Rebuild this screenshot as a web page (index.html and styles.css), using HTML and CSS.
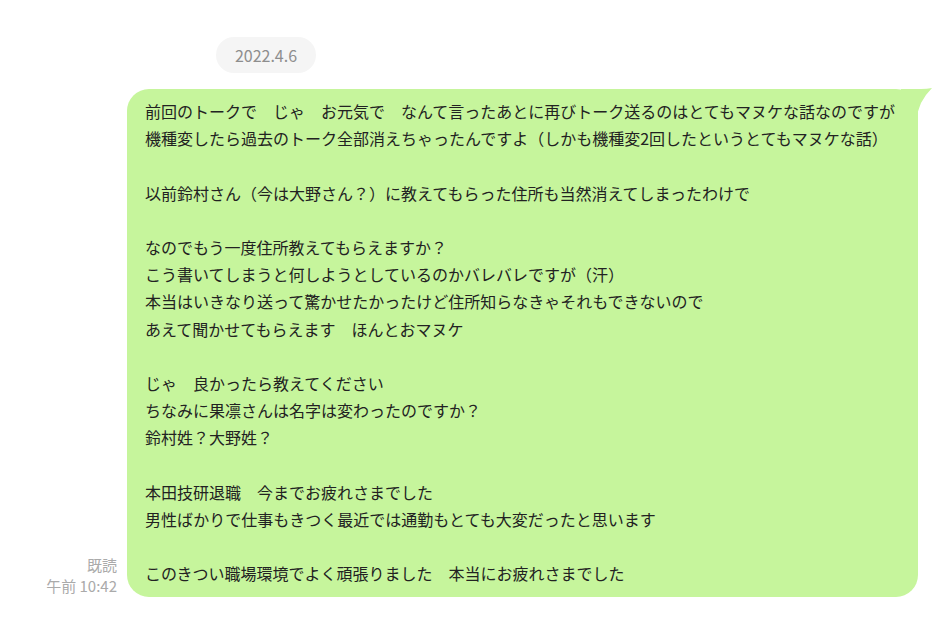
FILE: index.html
```html
<!DOCTYPE html>
<html lang="ja">
<head>
    <meta charset="UTF-8">
    <title>トーク</title>
    <link rel="stylesheet" href="styles.css">
</head>
<body>
    <div class="talk">
        <div class="date-row">
            <span class="date">2022.4.6</span>
        </div>
        <div class="msg-row">
            <div class="meta">
                <div>既読</div>
                <div>午前 10:42</div>
            </div>
            <div class="bubble">
                <svg class="tail" width="32" height="26" viewBox="0 0 32 26">
                    <path d="M0 0 L20 0 Q26 0 31 -1 Q24 6 20 14 Q17 22 16 26 L0 26 Z" fill="#c6f59c"/>
                </svg>
                <p class="text">前回のトークで　じゃ　お元気で　なんて言ったあとに再びトーク送るのはとてもマヌケな話なのですが
機種変したら過去のトーク全部消えちゃったんですよ（しかも機種変2回したというとてもマヌケな話）

以前鈴村さん（今は大野さん？）に教えてもらった住所も当然消えてしまったわけで

なのでもう一度住所教えてもらえますか？
こう書いてしまうと何しようとしているのかバレバレですが（汗）
本当はいきなり送って驚かせたかったけど住所知らなきゃそれもできないので
あえて聞かせてもらえます　ほんとおマヌケ

じゃ　良かったら教えてください
ちなみに果凛さんは名字は変わったのですか？
鈴村姓？大野姓？

本田技研退職　今までお疲れさまでした
男性ばかりで仕事もきつく最近では通勤もとても大変だったと思います

このきつい職場環境でよく頑張りました　本当にお疲れさまでした</p>
            </div>
        </div>
    </div>
</body>
</html>
```

FILE: styles.css
```css
body {
    margin: 0;
    background-color: #fff;
    font-family: "Noto Sans CJK JP", "Noto Sans", sans-serif;
    color: #222;
}
.talk {
    display: flex;
    flex-direction: column;
    padding-top: 37px;
}
.date-row {
    padding-left: 216px;
    margin-bottom: 16px;
}
.date {
    display: inline-block;
    width: 100px;
    height: 36px;
    line-height: 36px;
    text-align: center;
    background-color: #f5f5f5;
    border-radius: 18px;
    color: #8e8e8e;
    font-size: 16px;
}
.msg-row {
    display: flex;
    align-items: flex-end;
}
.meta {
    width: 117px;
    text-align: right;
    font-size: 15px;
    line-height: 21px;
    color: #aaa;
    margin-right: 10px;
    padding-bottom: 1px;
}
.bubble {
    position: relative;
    width: 791px;
    background-color: #c6f59c;
    border-radius: 22px;
    padding: 9px 18px 9px;
    box-sizing: border-box;
}
.tail {
    position: absolute;
    top: 0;
    right: -15px;
    overflow: visible;
}
.text {
    margin: 0;
    white-space: pre-wrap;
    font-size: 16px;
    line-height: 27.2px;
}
```
